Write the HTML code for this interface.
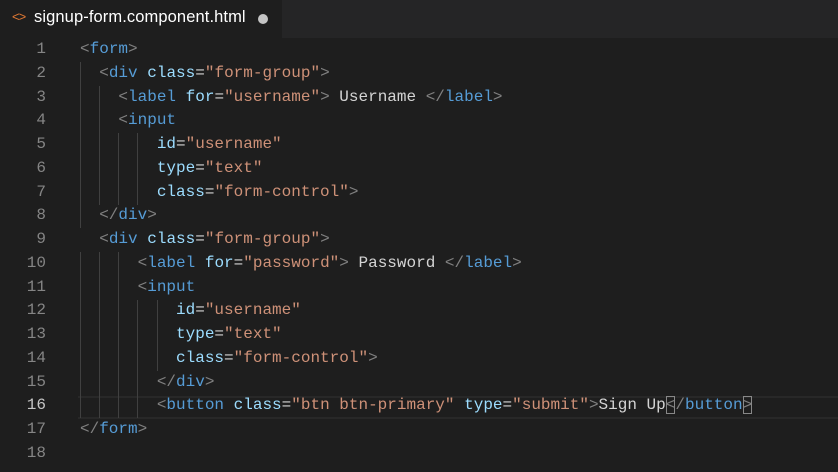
<!DOCTYPE html>
<html><head><style>
body{margin:0;width:838px;height:472px;background:#1e1e1e;overflow:hidden;position:relative;font-family:"Liberation Mono",monospace;}
.tabs{position:absolute;left:0;top:0;width:838px;height:38px;background:#252526;}
.tab{position:absolute;left:0;top:0;width:282px;height:38px;background:#1e1e1e;font-family:"Liberation Sans",sans-serif;font-size:16.5px;color:#fff;}
.tab .ic{position:absolute;left:12px;top:9px;color:#e37933;font-size:13px;letter-spacing:-1px}
.tab .nm{position:absolute;left:34px;top:8px;letter-spacing:0.1px}
.tab .dot{position:absolute;left:258px;top:14px;width:10px;height:10px;border-radius:50%;background:#c5c5c5}
.code{position:absolute;left:0;top:38px;width:838px}
.ln{height:23.76px;line-height:23.76px;font-size:16px;white-space:pre;position:relative}
.n{position:absolute;right:792px;color:#858585;text-align:right}
.t{position:absolute;left:80px;color:#d4d4d4}
.g{position:absolute;width:1px;background:#404040}
.p{color:#808080}.k{color:#569cd6}.a{color:#9cdcfe}.s{color:#ce9178}
.bx{outline:1px solid #888;outline-offset:-1px}
</style></head><body>
<div class="tabs"><div class="tab"><span class="ic">&lt;&gt;</span><span class="nm">signup-form.component.html</span><span class="dot"></span></div></div>
<div style="position:absolute;left:78px;top:395.5px;width:760px;height:23.76px;box-sizing:border-box;border-top:2px solid #282828;border-bottom:2px solid #282828"></div>
<div class="g" style="left:80px;top:62px;height:166px"></div>
<div class="g" style="left:99px;top:86px;height:119px"></div>
<div class="g" style="left:118px;top:133px;height:72px"></div>
<div class="g" style="left:137px;top:133px;height:72px"></div>
<div class="g" style="left:80px;top:252px;height:166px"></div>
<div class="g" style="left:99px;top:252px;height:166px"></div>
<div class="g" style="left:118px;top:252px;height:166px"></div>
<div class="g" style="left:137px;top:300px;height:118px"></div>
<div class="g" style="left:157px;top:300px;height:71px"></div>
<div class="code">
<div class="ln"><span class="n">1</span><span class="t"><span class="p">&lt;</span><span class="k">form</span><span class="p">&gt;</span></span></div>
<div class="ln"><span class="n">2</span><span class="t">  <span class="p">&lt;</span><span class="k">div</span> <span class="a">class</span>=<span class="s">"form-group"</span><span class="p">&gt;</span></span></div>
<div class="ln"><span class="n">3</span><span class="t">    <span class="p">&lt;</span><span class="k">label</span> <span class="a">for</span>=<span class="s">"username"</span><span class="p">&gt;</span> Username <span class="p">&lt;/</span><span class="k">label</span><span class="p">&gt;</span></span></div>
<div class="ln"><span class="n">4</span><span class="t">    <span class="p">&lt;</span><span class="k">input</span></span></div>
<div class="ln"><span class="n">5</span><span class="t">        <span class="a">id</span>=<span class="s">"username"</span></span></div>
<div class="ln"><span class="n">6</span><span class="t">        <span class="a">type</span>=<span class="s">"text"</span></span></div>
<div class="ln"><span class="n">7</span><span class="t">        <span class="a">class</span>=<span class="s">"form-control"</span><span class="p">&gt;</span></span></div>
<div class="ln"><span class="n">8</span><span class="t">  <span class="p">&lt;/</span><span class="k">div</span><span class="p">&gt;</span></span></div>
<div class="ln"><span class="n">9</span><span class="t">  <span class="p">&lt;</span><span class="k">div</span> <span class="a">class</span>=<span class="s">"form-group"</span><span class="p">&gt;</span></span></div>
<div class="ln"><span class="n">10</span><span class="t">      <span class="p">&lt;</span><span class="k">label</span> <span class="a">for</span>=<span class="s">"password"</span><span class="p">&gt;</span> Password <span class="p">&lt;/</span><span class="k">label</span><span class="p">&gt;</span></span></div>
<div class="ln"><span class="n">11</span><span class="t">      <span class="p">&lt;</span><span class="k">input</span></span></div>
<div class="ln"><span class="n">12</span><span class="t">          <span class="a">id</span>=<span class="s">"username"</span></span></div>
<div class="ln"><span class="n">13</span><span class="t">          <span class="a">type</span>=<span class="s">"text"</span></span></div>
<div class="ln"><span class="n">14</span><span class="t">          <span class="a">class</span>=<span class="s">"form-control"</span><span class="p">&gt;</span></span></div>
<div class="ln"><span class="n">15</span><span class="t">        <span class="p">&lt;/</span><span class="k">div</span><span class="p">&gt;</span></span></div>
<div class="ln"><span class="n" style="color:#c6c6c6">16</span><span class="t">        <span class="p">&lt;</span><span class="k">button</span> <span class="a">class</span>=<span class="s">"btn btn-primary"</span> <span class="a">type</span>=<span class="s">"submit"</span><span class="p">&gt;</span>Sign Up<span class="p bx">&lt;</span><span class="p">/</span><span class="k">button</span><span class="p bx">&gt;</span></span></div>
<div class="ln"><span class="n">17</span><span class="t"><span class="p">&lt;/</span><span class="k">form</span><span class="p">&gt;</span></span></div>
<div class="ln"><span class="n">18</span></div>
</div>
</body></html>
